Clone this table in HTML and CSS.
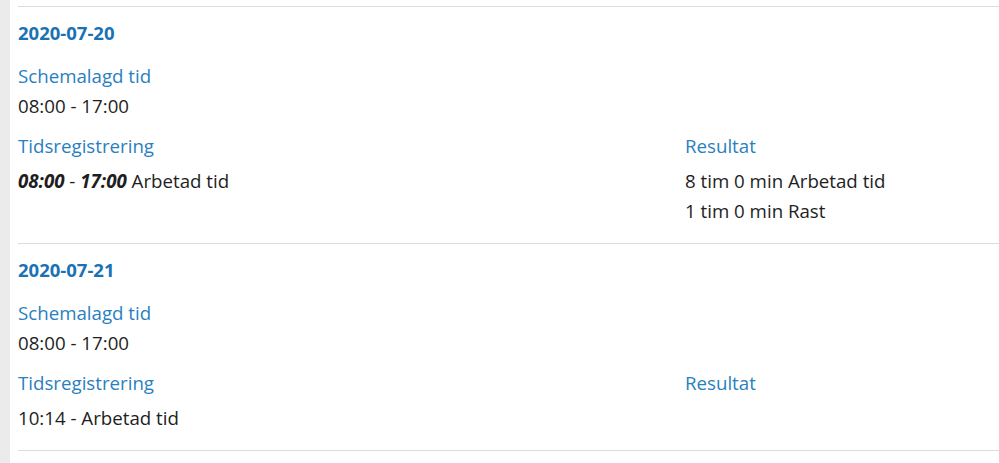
FILE: index.html
```html
<!DOCTYPE html>
<html lang="sv">
<head>
<meta charset="utf-8">
<title>Tidsregistrering</title>
<link rel="stylesheet" href="styles.css">
</head>
<body>
<div class="page">
  <div class="strip"></div>
  <main class="content">
    <section class="day">
      <h2 class="date">2020-07-20</h2>
      <div class="label label-first">Schemalagd tid</div>
      <div class="value">08:00 - 17:00</div>
      <div class="cols">
        <div class="col">
          <div class="label">Tidsregistrering</div>
          <div class="value value-reg"><b><i>08:00</i></b> - <b><i>17:00</i></b> Arbetad tid</div>
        </div>
        <div class="col">
          <div class="label">Resultat</div>
          <div class="value value-reg">8 tim 0 min Arbetad tid</div>
          <div class="value">1 tim 0 min Rast</div>
        </div>
      </div>
    </section>
    <section class="day">
      <h2 class="date">2020-07-21</h2>
      <div class="label label-first">Schemalagd tid</div>
      <div class="value">08:00 - 17:00</div>
      <div class="cols">
        <div class="col">
          <div class="label">Tidsregistrering</div>
          <div class="value value-reg">10:14 - Arbetad tid</div>
        </div>
        <div class="col">
          <div class="label">Resultat</div>
        </div>
      </div>
    </section>
    <div class="end"></div>
  </main>
</div>
</body>
</html>
```

FILE: styles.css
```css
html, body {
  margin: 0;
  padding: 0;
  background: #ffffff;
}
body {
  font-family: "Open Sans", "Liberation Sans", sans-serif;
  font-size: 18.7px;
  line-height: 30px;
  color: #1e1e1e;
}
.page {
  display: flex;
  min-height: 463px;
}
.strip {
  width: 10px;
  flex: none;
  background: #ebebeb;
}
.content {
  flex: 1;
  padding-left: 8px;
  padding-top: 6px;
}
.day {
  border-top: 1px solid #dcdcdc;
  padding-top: 11px;
  padding-bottom: 17px;
}
.end {
  border-top: 1px solid #dcdcdc;
}
.date {
  margin: 0;
  font-size: 18.5px;
  line-height: 30px;
  font-weight: 700;
  color: #1a72b4;
}
.label {
  color: #2a7fc0;
  margin-top: 10px;
}
.label-first {
  margin-top: 13px;
}
.value-reg {
  margin-top: 5px;
}
.cols {
  display: grid;
  grid-template-columns: 667px 1fr;
}
b {
  font-weight: 700;
}
```
